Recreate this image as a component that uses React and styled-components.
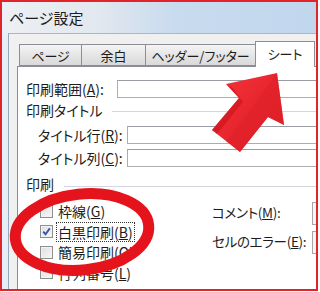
import styled, { createGlobalStyle } from 'styled-components'

const Global = createGlobalStyle`
  body {
    margin: 0;
    background: #fff;
    font-family: "Noto Sans CJK JP", "Noto Sans", sans-serif;
    font-feature-settings: "palt";
    color: #1c1c1c;
  }
`

const Root = styled.div`
  position: relative;
  width: 320px;
  height: 292px;
  overflow: hidden;
  background: #fff;
`

const Window = styled.div`
  width: 318px;
  height: 291px;
  box-sizing: border-box;
  border: 2px solid #e1232b;
  display: flex;
  flex-direction: column;
  overflow: hidden;
`

const TitleBar = styled.div`
  height: 31px;
  flex-shrink: 0;
  display: flex;
  align-items: center;
  padding-left: 7px;
  font-size: 15px;
  line-height: 1;
  background: linear-gradient(to right, #edf0f4 0%, #e2e8ef 30%, #c9dbee 55%, #c1d7ee 100%);
`

const Body = styled.div`
  flex: 1;
  display: flex;
  min-height: 0;
`

const FrameEdge = styled.div`
  width: 6px;
  flex-shrink: 0;
  background: #e8eef5;
  border-right: 1px solid #98a8ba;
`

const Client = styled.div`
  flex: 1;
  min-width: 0;
  display: flex;
  flex-direction: column;
  background: #f0f0f0;
  border-top: 1px solid #a9b8c8;
  padding: 7px 0 0 8px;
`

const TabRow = styled.div`
  height: 25px;
  flex-shrink: 0;
  display: flex;
  align-items: flex-end;
  padding-left: 2px;
`

const Tab = styled.div`
  width: ${p => p.$w}px;
  height: ${p => (p.$active ? 26 : 22)}px;
  box-sizing: border-box;
  flex-shrink: 0;
  display: flex;
  align-items: center;
  justify-content: center;
  margin-right: -1px;
  margin-bottom: ${p => (p.$active ? -1 : 0)}px;
  border: 1px solid #8c8e94;
  border-bottom: ${p => (p.$active ? 'none' : '1px solid #8c8e94')};
  background: ${p => (p.$active ? '#fff' : 'linear-gradient(#f4f4f4, #e6e6e6 50%, #d9d9d9)')};
  position: relative;
  z-index: ${p => (p.$active ? 1 : 0)};
  font-size: 13px;
  line-height: 1;
  padding-bottom: ${p => (p.$active ? 2 : 0)}px;
`

const Panel = styled.div`
  flex: 1;
  background: #fff;
  border: 1px solid #898c95;
  border-right: none;
  border-bottom: none;
  padding-left: 8px;
  font-size: 14px;
  line-height: 1;
  white-space: nowrap;
`

const FieldRow = styled.div`
  display: grid;
  grid-template-columns: ${p => p.$label}px 320px;
  align-items: center;
  margin-top: ${p => p.$mt}px;
  padding-left: ${p => p.$indent || 0}px;
`

const Input = styled.div`
  height: 18px;
  box-sizing: border-box;
  border: 1px solid #abadb3;
  border-top-color: #9a9ca3;
  background: #fff;
`

const Group = styled.div`
  display: flex;
  align-items: center;
  gap: 10px;
  height: 16px;
  margin-top: ${p => p.$mt}px;
`

const GroupLine = styled.div`
  flex: 1;
  border-top: 1px solid #d2d8de;
  margin-top: ${p => p.$off || 0}px;
`

const Key = styled.span`
  text-decoration: underline;
  text-underline-offset: 1px;
`

const PrintSection = styled.div`
  display: flex;
  margin-top: 9px;
`

const CheckList = styled.div`
  width: 186px;
  box-sizing: border-box;
  padding-left: 14px;
  flex-shrink: 0;
`

const CheckRow = styled.div`
  height: 20.5px;
  display: flex;
  align-items: center;
  gap: 5px;
`

const Box = styled.div`
  width: 13px;
  height: 13px;
  box-sizing: border-box;
  flex-shrink: 0;
  border: 1px solid #8e8f8f;
  background: linear-gradient(135deg, #dedede, #f8f8f8);
  box-shadow: inset 0 0 0 1px #f2f2f2;
  display: flex;
  align-items: center;
  justify-content: center;
`

const FocusLabel = styled.span`
  border: 1px dotted #333;
  padding: 2px 1px;
  margin-left: -2px;
`

const RightCol = styled.div`
  display: grid;
  grid-template-columns: 100px 100px;
  grid-auto-rows: 23px;
  row-gap: 6px;
  align-items: center;
  padding-top: 0.5px;
`

const SideLabel = styled.span`
  font-size: 13.5px;
  letter-spacing: -0.3px;
`

const Dropdown = styled.div`
  height: 23px;
  box-sizing: border-box;
  border: 1px solid #a7a7a7;
  background: #f6f6f6;
`

const Overlay = styled.svg`
  position: absolute;
  left: 0;
  top: 0;
  pointer-events: none;
`

function Check({ checked }) {
  return (
    <Box>
      {checked && (
        <svg width="9" height="9" viewBox="0 0 9 9">
          <path d="M1.2 4.6 L3.5 7.2 L7.8 1.4" fill="none" stroke="#2f55b0" strokeWidth="1.8" />
        </svg>
      )}
    </Box>
  )
}

export default function App() {
  return (
    <Root>
      <Global />
      <Window>
        <TitleBar>ページ設定</TitleBar>
        <Body>
          <FrameEdge />
          <Client>
            <TabRow>
              <Tab $w={63}>ページ</Tab>
              <Tab $w={65}>余白</Tab>
              <Tab $w={111}>ヘッダー/フッター</Tab>
              <Tab $w={60} $active>シート</Tab>
            </TabRow>
            <Panel>
              <FieldRow $label={91} $mt={13}>
                <span>印刷範囲(<Key>A</Key>):</span>
                <Input />
              </FieldRow>
              <Group $mt={4}>
                <span>印刷タイトル</span>
                <GroupLine $off={2} />
              </Group>
              <FieldRow $label={89} $mt={8} $indent={12}>
                <span>タイトル行(<Key>R</Key>):</span>
                <Input />
              </FieldRow>
              <FieldRow $label={89} $mt={5} $indent={12}>
                <span>タイトル列(<Key>C</Key>):</span>
                <Input />
              </FieldRow>
              <Group $mt={9}>
                <span>印刷</span>
                <GroupLine $off={4} />
              </Group>
              <PrintSection>
                <CheckList>
                  <CheckRow>
                    <Check />
                    <span>枠線(<Key>G</Key>)</span>
                  </CheckRow>
                  <CheckRow>
                    <Check checked />
                    <FocusLabel>白黒印刷(<Key>B</Key>)</FocusLabel>
                  </CheckRow>
                  <CheckRow>
                    <Check />
                    <span>簡易印刷(<Key>Q</Key>)</span>
                  </CheckRow>
                  <CheckRow>
                    <Check />
                    <span>行列番号(<Key>L</Key>)</span>
                  </CheckRow>
                </CheckList>
                <RightCol>
                  <SideLabel>コメント(<Key>M</Key>):</SideLabel>
                  <Dropdown />
                  <SideLabel>セルのエラー(<Key>E</Key>):</SideLabel>
                  <Dropdown />
                </RightCol>
              </PrintSection>
            </Panel>
          </Client>
        </Body>
      </Window>
      <Overlay width="320" height="292" viewBox="0 0 320 292">
        <defs>
          <linearGradient id="arrowFill" x1="0" y1="0" x2="1" y2="1">
            <stop offset="0" stopColor="#f5343a" />
            <stop offset="1" stopColor="#dc1821" />
          </linearGradient>
        </defs>
        <ellipse cx="82" cy="232" rx="67" ry="38" fill="none" stroke="#e5141c" strokeWidth="11" transform="rotate(-6 82 232)" />
        <polygon points="277,73 226,84 239,98 212,130 240,152 268,117 284,125" fill="url(#arrowFill)" />
        <polygon points="226,84 239,98 212,130 217,134 243,102 233,88" fill="#c8101a" opacity="0.55" />
        <polygon points="277,73 253,106 226,141 240,152 268,117 284,125" fill="#e0222a" opacity="0.6" />
      </Overlay>
    </Root>
  )
}
